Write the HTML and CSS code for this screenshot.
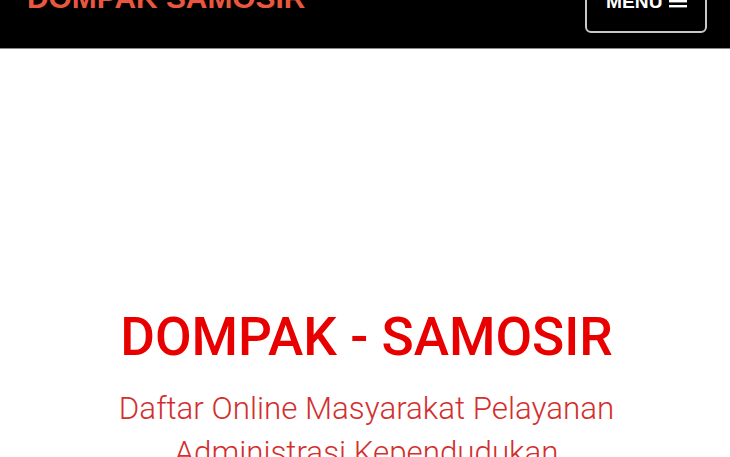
FILE: index.html
```html
<!DOCTYPE html>
<html lang="id">
<head>
<meta charset="utf-8">
<title>DOMPAK SAMOSIR</title>
<link rel="stylesheet" href="styles.css">
</head>
<body>
<header class="topbar">
  <a class="brand" href="#">DOMPAK SAMOSIR</a>
  <button class="menu-btn" type="button">
    <span class="menu-label">MENU</span>
    <svg class="menu-icon" width="18" height="16" viewBox="0 0 18 16" aria-hidden="true">
      <rect x="0" y="0" width="18" height="2.4" fill="#fff"/>
      <rect x="0" y="5" width="18" height="2.4" fill="#fff"/>
      <rect x="0" y="10" width="18" height="2.4" fill="#fff"/>
    </svg>
  </button>
</header>
<main class="hero">
  <h1 class="hero-title">DOMPAK - SAMOSIR</h1>
  <p class="hero-sub">Daftar Online Masyarakat Pelayanan Administrasi Kependudukan</p>
</main>
</body>
</html>
```
FILE: styles.css
```css
html, body {
  margin: 0;
  padding: 0;
  background: #fff;
}
body {
  font-family: Roboto, "Liberation Sans", sans-serif;
  overflow: hidden;
}
.topbar {
  height: 48px;
  background: #000;
  border-bottom: 1px solid #8a8a8a;
  display: flex;
  justify-content: space-between;
  align-items: flex-start;
  padding: 0 23px 0 27px;
  overflow: hidden;
}
.brand {
  font-family: "Liberation Sans", Arial, sans-serif;
  font-weight: bold;
  font-size: 29.9px;
  line-height: 1;
  color: #e9573f;
  text-decoration: none;
  margin-top: -17px;
  white-space: nowrap;
}
.menu-btn {
  margin-top: -22px;
  background: transparent;
  border: 2px solid #c8c8c8;
  border-radius: 6px;
  padding: 12px 16px 20px 19px;
  display: flex;
  align-items: flex-start;
  gap: 6px;
  color: #fff;
  font-family: "Liberation Sans", Arial, sans-serif;
  font-weight: bold;
  font-size: 19.2px;
  line-height: 19px;
  width: 122px;
  box-sizing: border-box;
}
.menu-label {
  display: block;
}
.menu-icon {
  display: block;
  margin-top: 3px;
}
.hero {
  padding: 257px 0 0 3px;
  text-align: center;
}
.hero-title {
  margin: 0;
  font-family: Roboto, sans-serif;
  font-weight: 500;
  font-size: 53.2px;
  line-height: 1.2;
  color: #e80000;
}
.hero-sub {
  margin: 17px auto 0;
  max-width: 560px;
  font-family: Roboto, sans-serif;
  font-weight: 300;
  font-size: 31.3px;
  line-height: 44px;
  color: #d32f2f;
}
```
